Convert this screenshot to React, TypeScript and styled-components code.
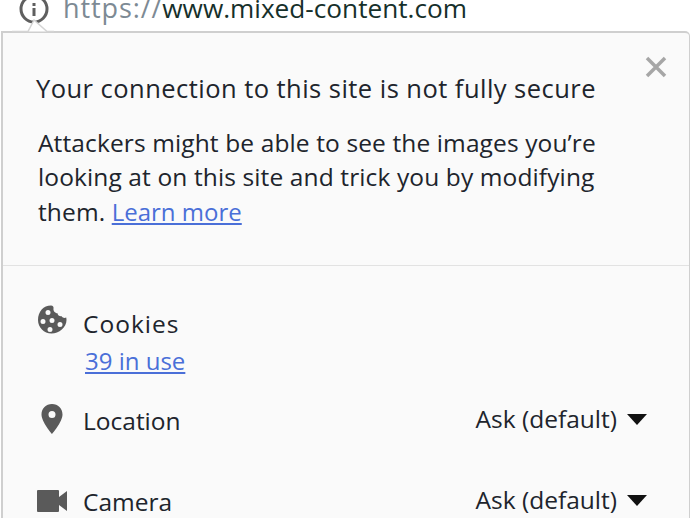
import styled, { createGlobalStyle } from 'styled-components';

const GlobalStyle = createGlobalStyle`
  html, body {
    margin: 0;
    padding: 0;
    width: 690px;
    height: 518px;
    overflow: hidden;
    background: #fff;
    font-family: "Open Sans", "Noto Sans", sans-serif;
  }
`;

const Page = styled.div`
  width: 690px;
  height: 518px;
  overflow: hidden;
  position: relative;
`;

const AddressBar = styled.div`
  height: 31px;
  display: flex;
  align-items: flex-end;
  gap: 14px;
  padding-left: 19px;
  overflow: hidden;
`;

const InfoIcon = styled.svg`
  width: 30px;
  height: 30px;
  flex: none;
  margin-bottom: 1px;
`;

const Url = styled.div`
  font-size: 26.2px;
  line-height: 30px;
  height: 30px;
  margin-top: -10px;
  position: relative;
  top: -8px;
  color: #16302b;
  white-space: nowrap;
`;

const Scheme = styled.span`
  font-size: 27px;
  letter-spacing: 0.9px;
  color: #7d8a94;
`;

const Notch = styled.svg`
  position: absolute;
  left: 10px;
  top: 19px;
  width: 46px;
  height: 14px;
`;

const Panel = styled.div`
  height: 487px;
  margin-left: 1px;
  background: #fafafa;
  border: solid #cfcfcf;
  border-width: 2px 1px 0 2px;
  border-top-right-radius: 5px;
  box-sizing: border-box;
`;

const Top = styled.section`
  height: 233px;
  padding: 38px 0 0 33px;
  box-sizing: border-box;
  border-bottom: 1px solid #e2e2e2;
  position: relative;
`;

const Close = styled.svg`
  position: absolute;
  top: 23px;
  right: 22px;
  width: 22px;
  height: 22px;
`;

const Heading = styled.h1`
  margin: 0 0 21px;
  font-size: 25.5px;
  letter-spacing: 0.46px;
  line-height: 34px;
  font-weight: 400;
  color: #20242c;
  white-space: nowrap;
`;

const Body = styled.p`
  margin: 0 0 0 2px;
  font-size: 24.5px;
  letter-spacing: 0.12px;
  line-height: 34.3px;
  color: #20242c;
  white-space: nowrap;
`;

const Link = styled.a`
  font-size: 24px;
  letter-spacing: 0;
  color: #4a6fd8;
  text-decoration: underline;
`;

const Permissions = styled.section`
  padding: 41px 42px 0 33px;
`;

const Row = styled.div<{ $height: number }>`
  height: ${({ $height }) => $height}px;
  display: grid;
  grid-template-columns: 47px 1fr auto;
  align-items: start;
  color: #20242c;
  font-size: 24.5px;
  line-height: 34px;
`;

const IconSlot = styled.div<{ $lift: number }>`
  width: 32px;
  height: 34px;
  margin-top: -${({ $lift }) => $lift}px;
  display: flex;
  align-items: center;
  justify-content: center;
`;

const Label = styled.div`
  white-space: nowrap;
`;

const CookieName = styled.span`
  letter-spacing: 1px;
`;

const SubLink = styled(Link)`
  display: block;
  margin: 3px 0 0 2px;
`;

const Select = styled.div`
  margin-top: -2px;
  display: flex;
  align-items: center;
  gap: 10px;
  white-space: nowrap;
`;

const Caret = styled.span`
  width: 0;
  height: 0;
  border-left: 10px solid transparent;
  border-right: 10px solid transparent;
  border-top: 11px solid #111;
`;

const App = () => (
  <Page>
    <GlobalStyle />
    <AddressBar>
      <InfoIcon viewBox="0 0 30 30">
        <circle cx="15" cy="9" r="13" fill="none" stroke="#5f5f5f" strokeWidth="3" />
        <rect x="13.5" y="8" width="3" height="8" fill="#5f5f5f" />
        <rect x="13.5" y="3" width="3" height="3" fill="#5f5f5f" />
      </InfoIcon>
      <Url><Scheme>https://</Scheme>www.mixed-content.com</Url>
    </AddressBar>
    <Panel>
      <Top>
        <Close viewBox="0 0 22 22">
          <path d="M2 2l18 18M20 2L2 20" stroke="#a6a6a6" strokeWidth="3.5" />
        </Close>
        <Heading>Your connection to this site is not fully secure</Heading>
        <Body>
          Attackers might be able to see the images you’re<br />
          looking at on this site and trick you by modifying<br />
          them. <Link>Learn more</Link>
        </Body>
      </Top>
      <Permissions>
        <Row $height={97}>
          <IconSlot $lift={4}>
            <svg width="30" height="30" viewBox="0 0 30 30">
              <path fillRule="evenodd" fill="#5a5a5a" d="M14 0.500C6.500 0.500 1 6.500 1 15c0 7.500 6 13.500 13.500 13.500S29.500 22.500 29.500 15c0-1-.1-1.500-.3-2.500-1.500.8-3.700.4-4.500-1.300-2 .5-4-1-4.200-3-2.500 0-4.500-2.500-4-5 .3-1.200-.5-2.700-2.500-2.700zM11 5a2.500 2.500 0 1 1 0 5 2.500 2.500 0 0 1 0-5zM6 14a2.500 2.500 0 1 1 0 5 2.500 2.500 0 0 1 0-5zM15 13a2.500 2.500 0 1 1 0 5 2.500 2.500 0 0 1 0-5zM23 17a2.500 2.500 0 1 1 0 5 2.500 2.500 0 0 1 0-5zM13 22a2.500 2.500 0 1 1 0 5 2.500 2.500 0 0 1 0-5z" />
            </svg>
          </IconSlot>
          <Label>
            <CookieName>Cookies</CookieName>
            <SubLink>39 in use</SubLink>
          </Label>
        </Row>
        <Row $height={81}>
          <IconSlot $lift={2}>
            <svg width="30" height="30" viewBox="0 0 30 30">
              <path fillRule="evenodd" fill="#5a5a5a" d="M15 0C9 0 4.500 4.500 4.500 10.500 4.500 18 15 30 15 30s10.500-12 10.500-19.500C25.500 4.500 21 0 15 0zm0 7a3.500 3.500 0 1 1 0 7 3.500 3.500 0 0 1 0-7z" />
            </svg>
          </IconSlot>
          <Label>Location</Label>
          <Select>Ask (default)<Caret /></Select>
        </Row>
        <Row $height={34}>
          <IconSlot $lift={1}>
            <svg width="30" height="22" viewBox="0 0 30 22">
              <path fill="#5a5a5a" d="M1 0h20a1 1 0 0 1 1 1v6l8-6v20l-8-6v6a1 1 0 0 1-1 1H1a1 1 0 0 1-1-1V1a1 1 0 0 1 1-1z" />
            </svg>
          </IconSlot>
          <Label>Camera</Label>
          <Select>Ask (default)<Caret /></Select>
        </Row>
      </Permissions>
    </Panel>
    <Notch viewBox="0 0 46 14">
      <path d="M2 12.500h16L24 1l13 11.500h7" fill="#fff" stroke="#d4d4d4" strokeWidth="1.500" />
    </Notch>
  </Page>
);

export default App;
